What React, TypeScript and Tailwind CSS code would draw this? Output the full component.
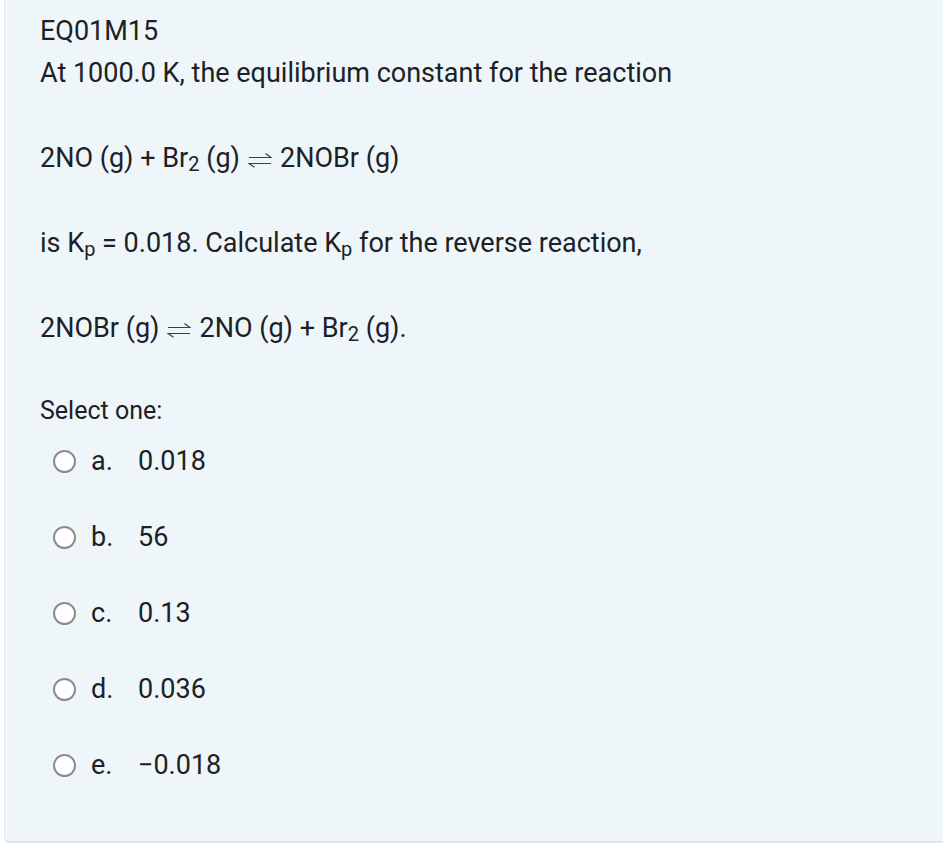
import React from "react"

function Eq() {
  return (
    <svg width="24" height="16" viewBox="0 0 24 16" className="mx-[8px] inline-block align-middle" fill="none" stroke="#3a3f44" strokeWidth="1.2">
      <path d="M1 5.5 H23 L17.5 1.5" />
      <path d="M23 11.5 H1 L6.5 15.2" />
    </svg>
  )
}

function Sub({ children }: { children: React.ReactNode }) {
  return <sub className="relative top-[4px] text-[20px] leading-none align-baseline">{children}</sub>
}

const options = [
  { letter: "a.", value: "0.018" },
  { letter: "b.", value: "56" },
  { letter: "c.", value: "0.13" },
  { letter: "d.", value: "0.036" },
  { letter: "e.", value: "\u22120.018" },
]

export default function App() {
  return (
    <div className="h-[846px] w-[943px] overflow-hidden bg-white font-['Roboto',sans-serif] text-[#1d2125]">
      <div className="ml-[4px] mt-[-10px] h-[853px] w-[960px] rounded-bl-[5px] border-b-2 border-l border-[#dde8ef] bg-[#eef6fa] pl-[35px] pt-[20px] text-[27px]">
        <div className="leading-[42px]">EQ01M15</div>
        <p className="leading-[42px]">At 1000.0 K, the equilibrium constant for the reaction</p>
        <p className="mt-[43px] leading-[42px]">
          2NO (g) + Br<Sub>2</Sub> (g)
          <Eq />
          2NOBr (g)
        </p>
        <p className="mt-[43px] leading-[42px]">
          is K<Sub>p</Sub> = 0.018. Calculate K<Sub>p</Sub> for the reverse reaction,
        </p>
        <p className="mt-[43px] leading-[42px]">
          2NOBr (g)
          <Eq />
          2NO (g) + Br<Sub>2</Sub> (g).
        </p>
        <div className="mt-[41px] text-[25px] leading-[42px]">Select one:</div>
        <div className="mt-[8px] flex flex-col gap-[34px]">
          {options.map((o) => (
            <label key={o.letter} className="flex h-[42px] items-center">
              <span className="ml-[13px] h-[23px] w-[23px] shrink-0 rounded-full border-2 border-[#8c8c8c] bg-white" />
              <span className="ml-[15px] w-[47px]">{o.letter}</span>
              <span>{o.value}</span>
            </label>
          ))}
        </div>
      </div>
    </div>
  )
}
